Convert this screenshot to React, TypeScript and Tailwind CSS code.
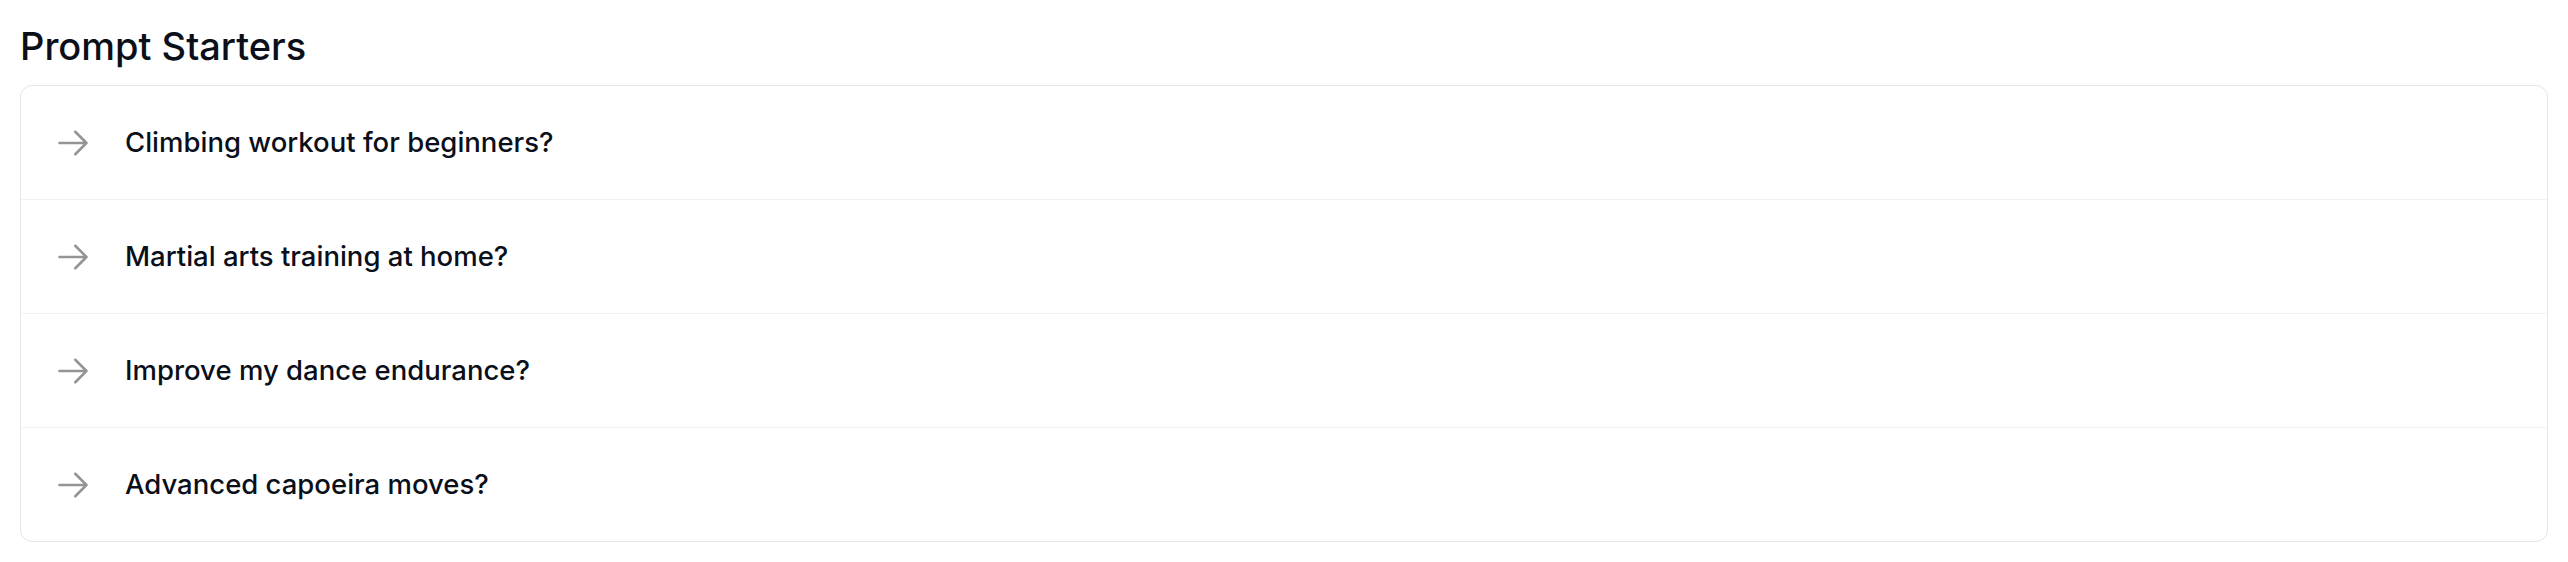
const starters = [
  "Climbing workout for beginners?",
  "Martial arts training at home?",
  "Improve my dance endurance?",
  "Advanced capoeira moves?",
];

function ArrowRight() {
  return (
    <svg
      viewBox="0 0 24 24"
      fill="none"
      stroke="currentColor"
      strokeWidth={1.7}
      className="w-9 h-9 shrink-0"
    >
      <path
        strokeLinecap="round"
        strokeLinejoin="round"
        d="M13.5 4.5 21 12m0 0-7.5 7.5M21 12H3"
      />
    </svg>
  );
}

export default function App() {
  return (
    <div
      className="min-h-screen bg-white px-5 pt-[23px]"
      style={{ fontFamily: "Inter, 'Noto Sans', sans-serif" }}
    >
      <h2 className="text-[38px] leading-[46px] font-medium text-[#0b0f19] mb-4">
        Prompt Starters
      </h2>
      <div className="border border-[#e3e5e8] rounded-xl bg-white">
        {starters.map((s, i) => (
          <button
            key={s}
            className={`w-full flex items-center gap-[34px] pl-[34px] py-[36px] text-left ${i > 0 ? "border-t border-[#f1f2f4]" : ""}`}
          >
            <span className="text-[#949494]">
              <ArrowRight />
            </span>
            <span className="text-[27.5px] leading-[41px] font-medium text-[#0b0f19]">
              {s}
            </span>
          </button>
        ))}
      </div>
    </div>
  );
}
